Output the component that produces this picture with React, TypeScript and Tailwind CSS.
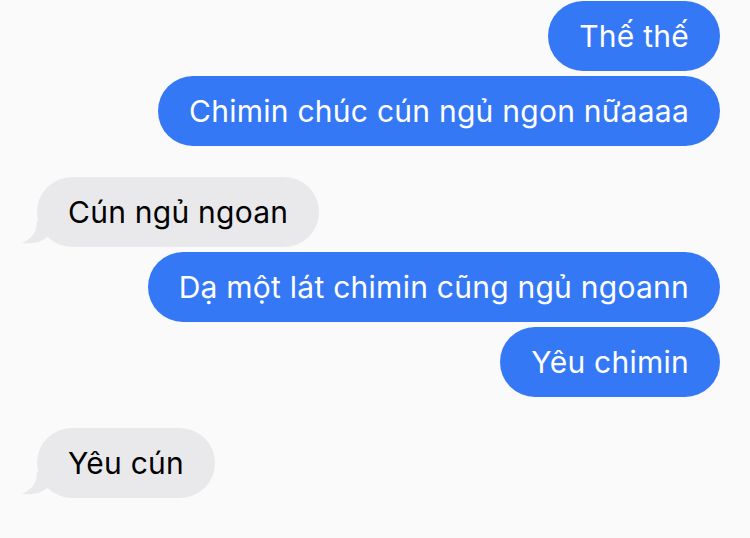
const messages = [
  { text: 'Thế thế', me: true },
  { text: 'Chimin chúc cún ngủ ngon nữaaaa', me: true },
  { text: 'Cún ngủ ngoan', me: false },
  { text: 'Dạ một lát chimin cũng ngủ ngoann', me: true },
  { text: 'Yêu chimin', me: true },
  { text: 'Yêu cún', me: false },
];

function Tail() {
  return (
    <svg
      className="absolute left-[-16px] bottom-0"
      width="30"
      height="26"
      viewBox="0 0 30 26"
    >
      <path
        d="M16 0 C16 10 12 17 1 22 C9 23 18 22 25 17 L30 12 L30 0 Z"
        fill="#e9e9eb"
      />
    </svg>
  );
}

export default function App() {
  return (
    <div
      className="w-[750px] h-[538px] bg-[#fafafa] overflow-hidden flex flex-col pt-px pr-[30px] pl-[37px]"
      style={{ fontFamily: 'Inter, "Noto Sans", sans-serif' }}
    >
      {messages.map((m, i) => {
        const prev = messages[i - 1];
        // larger gap only before an incoming (grey) message
        const gap = i === 0 ? '' : !m.me && prev.me ? 'mt-[31px]' : 'mt-[5px]';
        return (
          <div key={i} className={`flex ${m.me ? 'justify-end' : 'justify-start'} ${gap}`}>
            <div
              className={`relative h-[70px] rounded-full px-[31px] flex items-center text-[30px] tracking-[0.25px] ${
                m.me ? 'bg-[#3478f6] text-white' : 'bg-[#e9e9eb] text-black'
              }`}
            >
              {!m.me && <Tail />}
              <span className="relative">{m.text}</span>
            </div>
          </div>
        );
      })}
    </div>
  );
}
